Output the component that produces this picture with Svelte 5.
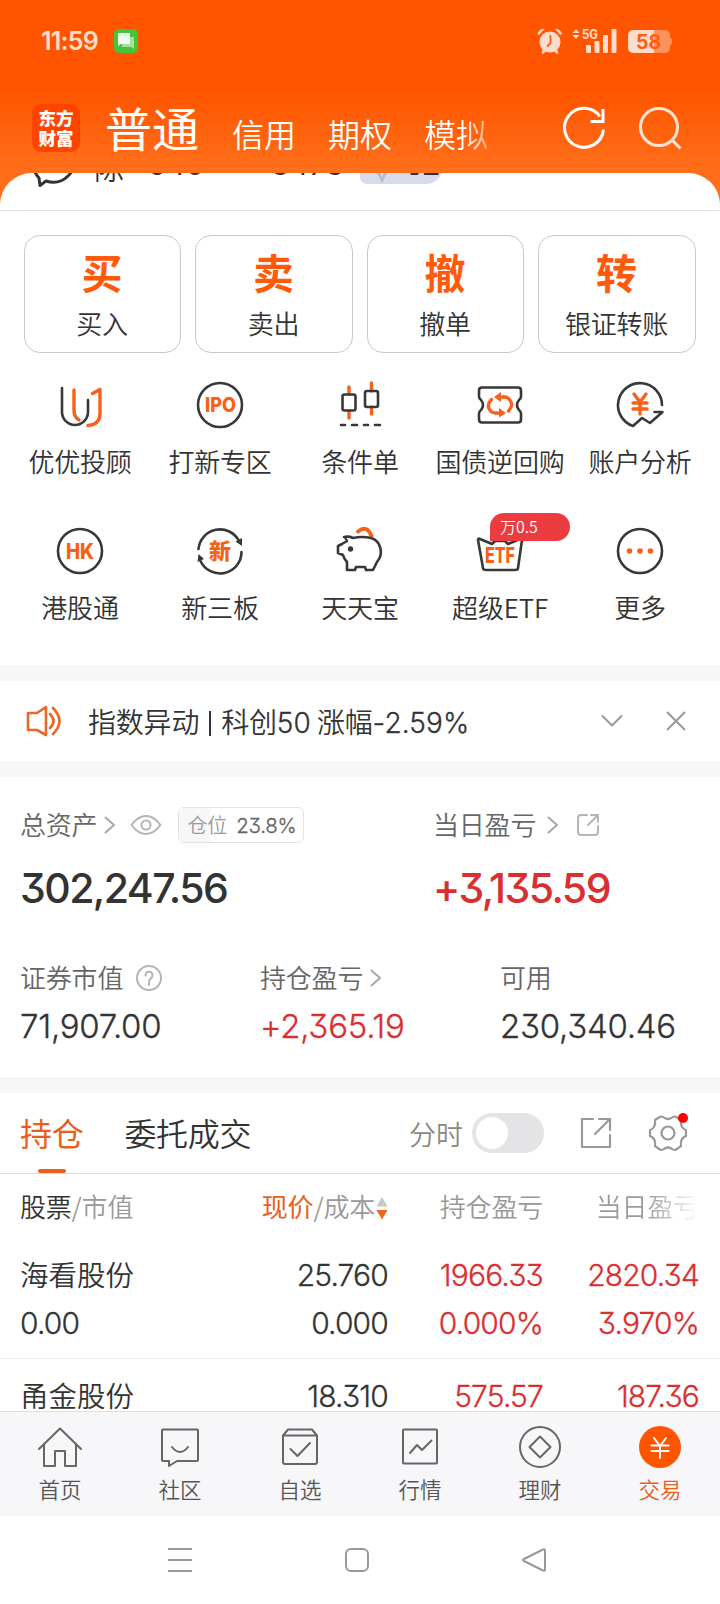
<script>
  const tabs = ['信用', '期权', '模拟'];

  const actions = [
    { mark: '买', label: '买入' },
    { mark: '卖', label: '卖出' },
    { mark: '撤', label: '撤单' },
    { mark: '转', label: '银证转账' }
  ];

  const tools = [
    { icon: 'advisor', label: '优优投顾' },
    { icon: 'ipo', label: '打新专区' },
    { icon: 'candles', label: '条件单' },
    { icon: 'ticket', label: '国债逆回购' },
    { icon: 'analysis', label: '账户分析' },
    { icon: 'hk', label: '港股通' },
    { icon: 'newboard', label: '新三板' },
    { icon: 'piggy', label: '天天宝' },
    { icon: 'etf', label: '超级ETF', tag: '万0.5' },
    { icon: 'more', label: '更多' }
  ];

  const holdings = [
    { name: '海看股份', value: '0.00', price: '25.760', cost: '0.000', profit: '1966.33', rate: '0.000%', day: '2820.34', dayRate: '3.970%' },
    { name: '甬金股份', price: '18.310', profit: '575.57', day: '187.36' }
  ];

  const nav = [
    { icon: 'home', label: '首页' },
    { icon: 'chat', label: '社区' },
    { icon: 'box', label: '自选' },
    { icon: 'chart', label: '行情' },
    { icon: 'wealth', label: '理财' },
    { icon: 'trade', label: '交易' }
  ];

  let current = $state('交易');
  let timeline = $state(false);
  let showNotice = $state(true);
  const position = 25;
</script>

{#snippet chevron()}
  <svg class="chevron" width="12" height="18" viewBox="0 0 12 18"><path d="M1.5 1.5 10 9l-8.500 7.500" /></svg>
{/snippet}

<div class="page">
  <header>
    <div class="status">
      <span class="clock">11:59</span>
      <svg class="msg" width="24" height="24" viewBox="0 0 24 24">
        <rect width="24" height="24" rx="5" fill="#45c43a" />
        <path d="M8 8h12v12l-3-2H8z" fill="#a5e39c" />
        <path d="M4 4h12v11H7l-3 2z" fill="#f0faee" />
      </svg>
      <svg class="signal" width="136" height="26" viewBox="0 0 136 26">
        <g fill="#ffdccb">
          <circle cx="13" cy="14" r="10.500" />
          <path d="M.5 6.500a6 6 0 0 1 7-5.500l-5 5.500zM25 6.500A6 6 0 0 0 18 1l5 5.500zM6 21l3 2-2.500 3L4.500 25zM20 21l-3 2 2.500 3 2-1z" />
          <path d="m39 1 3.500 4h-7zM39 11l3.500-4h-7z" />
          <rect x="49" y="17" width="5" height="8" rx="1" />
          <rect x="57.500" y="13" width="5" height="12" rx="1" />
          <rect x="66" y="7" width="5" height="18" rx="1" />
          <rect x="74.500" y="1" width="5" height="24" rx="1" />
          <text x="45" y="10.500" font-size="13" font-weight="700" textLength="16" lengthAdjust="spacingAndGlyphs">5G</text>
          <path d="M96 2h21v23H96a5 5 0 0 1-5-5V7a5 5 0 0 1 5-5z" />
        </g>
        <path d="M117 2h11a5 5 0 0 1 5 5v2.500c3 1 3 7 0 8V20a5 5 0 0 1-5 5h-11z" fill="#ff925c" />
        <path d="M13.500 8v7l-3 3" fill="none" stroke="#ff5d10" stroke-width="1.800" />
        <text x="99" y="20.500" font-size="20" font-weight="700" fill="#ff5d10" textLength="25" lengthAdjust="spacingAndGlyphs">58</text>
      </svg>
    </div>
    <div class="titlebar">
      <div class="logo">东方<br />财富</div>
      <h1>普通</h1>
      <nav class="modes">
        {#each tabs as tab}
          <span>{tab}</span>
        {/each}
      </nav>
      <svg class="head-icon" width="44" height="44" viewBox="0 0 44 44"><path d="M40.500 23.500A19.500 19.500 0 1 1 37 10.500M40 3v12.500H27.500" /></svg>
      <svg class="head-icon search" width="44" height="44" viewBox="0 0 44 44"><circle cx="21" cy="21" r="18.500" /><path d="m34 34 8.500 8.500" /></svg>
    </div>
  </header>

  <main>
    <div class="account">
      <svg width="42" height="34" viewBox="0 0 42 34"><path d="M7 24C-4 12 7 2 21 2s26 10 15 20c-5 5-13 8-22 5l-6 4.500z" /></svg>
      <span class="owner">陈</span>
      <span class="acct-no">540</span>
      <span class="acct-no tail">8473</span>
      <span class="level">
        <svg width="18" height="18" viewBox="0 0 18 18"><path d="M1 1h16L9 17z" fill="#b9bac9" /><path d="M6 1h6L9 12z" fill="#e4e4ee" /></svg>
        <b>V2</b>
      </span>
    </div>

    <section class="actions">
      {#each actions as a}
        <button>
          <b>{a.mark}</b>
          <span>{a.label}</span>
        </button>
      {/each}
    </section>

    <section class="tools">
      {#each tools as t}
        <div class="tool">
          <svg width="52" height="52" viewBox="0 0 52 52">
            {#if t.icon === 'advisor'}
              <path d="M8 9v24a13 13 0 0 0 26 0V21" />
              <path class="o" d="M20 11v20q0 7 5 10M38.500 14.500l7.500-4v24q0 11-12 12" />
            {:else if t.icon === 'ipo'}
              <circle cx="26" cy="26" r="22" />
              <text x="11" y="33" font-size="20" textLength="31" lengthAdjust="spacingAndGlyphs">IPO</text>
            {:else if t.icon === 'candles'}
              <path class="o" d="M15 8v7M15 32v7M37.500 4v8M37.500 28v7" />
              <rect x="8.500" y="15.500" width="13" height="16" rx="2" />
              <rect x="31" y="12" width="13" height="16" rx="2" />
              <path d="M7 46h4M18 46h5M30 46h4M41 46h5" />
            {:else if t.icon === 'ticket'}
              <path d="M8 8.500h36q3 0 3 3v6q0 2-2 3.500-4 5 0 10 2 1.500 2 3.500v6q0 3-3 3H8q-3 0-3-3v-6q0-2 2-3.500 4-5 0-10-2-1.500-2-3.500v-6q0-3 3-3z" />
              <path class="o" d="M17.500 20.500q-5 5-2 10 2 3.500 6 3.500h6M34.500 32q5-5 2-10-2-4-6-4h-6" />
              <path class="of" d="m27 13-7 5 7 5zM25 29l7 5-7 4.500z" />
            {:else if t.icon === 'analysis'}
              <path d="M48 26A22 22 0 1 0 19 47l9-8 8 5 12.500-11h-8" />
              <path class="o" d="m20 15 6 8 6-8M19 24h14M19 30h14M26 23v12" />
            {:else if t.icon === 'hk'}
              <circle cx="26" cy="26" r="22" />
              <text x="12" y="33.500" font-size="21" textLength="28" lengthAdjust="spacingAndGlyphs">HK</text>
            {:else if t.icon === 'newboard'}
              <path d="M4.500 24a21.500 21.500 0 0 1 40.500-8M47.500 27a21.500 21.500 0 0 1-41 9" />
              <path class="df" d="m41.500 16.500 6.500 4.500v-8zM3.500 37l1-8 5.500 5z" />
              <text class="cjk" x="15" y="33.500" font-size="22">新</text>
            {:else if t.icon === 'piggy'}
              <path class="o thick" d="M24 6.500q9-7 13.500 4.500" />
              <path d="M13 16q-2-4-3-4 5-1 9 1 9-2 18 0c10 3 13 16 6 24l-4 8h-7l-1-3h-9l-1 3h-8v-8q-3-3-4-7l-5-2v-7l4-2z" />
              <circle class="df" cx="16.500" cy="24" r="2.700" />
            {:else if t.icon === 'etf'}
              <path d="M4 15q0-2 2-1l12 5 3-3h10l3 3 12-5q2-1 2 1l-4 28q0 2-3 2H12q-3 0-3-2z" />
              <text x="11" y="37.500" font-size="21" textLength="30" lengthAdjust="spacingAndGlyphs">ETF</text>
            {:else}
              <circle cx="26" cy="26" r="22" />
              <g class="of"><circle cx="15.500" cy="26" r="2.800" /><circle cx="26" cy="26" r="2.800" /><circle cx="36.500" cy="26" r="2.800" /></g>
            {/if}
          </svg>
          <span>{t.label}</span>
          {#if t.tag}<em>{t.tag}</em>{/if}
        </div>
      {/each}
    </section>

    {#if showNotice}
      <section class="notice">
        <svg width="36" height="34" viewBox="0 0 36 34"><path d="M2 9h9l9-6v28l-9-5H2zM24 10q7 7 0 14M27 4q13 13 0 26" /></svg>
        <p>指数异动<i></i>科创<span class="num">50</span> 涨幅<span class="num">-2.59%</span></p>
        <svg class="grey" width="22" height="22" viewBox="0 0 22 22"><path d="m1.500 6 9.500 9.500L20.500 6" /></svg>
        <svg class="grey" width="22" height="22" viewBox="0 0 22 22" role="button" tabindex="0" aria-label="关闭" onclick={() => (showNotice = false)} onkeydown={() => (showNotice = false)}><path d="m2.500 2.500 17 17M19.500 2.500l-17 17" /></svg>
      </section>
    {/if}

    <section class="assets">
      <div class="summary">
        <div class="total">
          <div class="label">
            总资产{@render chevron()}
            <svg class="eye" width="32" height="22" viewBox="0 0 32 22"><path d="M1.500 11Q8 2 16 2t14.500 9Q24 20 16 20T1.500 11z" /><circle cx="16" cy="11" r="4.500" /></svg>
            <div class="position">
              <div class="fill" style="width: {position}%"></div>
              <span>仓位</span><span class="num">23.8%</span>
            </div>
          </div>
          <strong class="num">302,247.56</strong>
        </div>
        <div class="today">
          <div class="label">
            当日盈亏{@render chevron()}
            <svg class="share" width="24" height="24" viewBox="0 0 24 24"><path d="M11 2H5Q2 2 2 5v14q0 3 3 3h14q3 0 3-3v-6M15 2h7v7M22 2 12 12" /></svg>
          </div>
          <strong class="num red">+3,135.59</strong>
        </div>
      </div>
      <div class="details">
        <div>
          <div class="label">
            证券市值
            <svg class="help" width="28" height="28" viewBox="0 0 28 28"><circle cx="14" cy="14" r="12" /><path d="M10.500 11.500c0-5 7-5 7 0 0 3-3.500 3-3.500 6M14 19v2" /></svg>
          </div>
          <span class="num">71,907.00</span>
        </div>
        <div>
          <div class="label">持仓盈亏{@render chevron()}</div>
          <span class="num red">+2,365.19</span>
        </div>
        <div>
          <div class="label">可用</div>
          <span class="num">230,340.46</span>
        </div>
      </div>
    </section>

    <section class="holdings">
      <div class="bar">
        <span class="tab on">持仓</span>
        <span class="tab">委托成交</span>
        <span class="mode">分时</span>
        <button class="switch" class:checked={timeline} aria-label="分时" onclick={() => (timeline = !timeline)}></button>
        <svg class="open" width="32" height="32" viewBox="0 0 32 32"><path d="M13 2H2v28h28V18M19 2h11v11M30 2 15 17" /></svg>
        <svg class="gear" width="40" height="40" viewBox="0 0 40 40">
          <path d="M12.500 3.500 15 4q5 4 10 0l2.500-.5 5.500 3.500q-1 8 5 10v6q-6 2-5 10l-5.500 4-2.500-.5q-5-4-10 0l-2.500.5L7 33q1-8-5-10v-6q6-2 5-10z" />
          <circle cx="20" cy="20" r="6.500" />
          <circle class="dot" cx="35" cy="5" r="5" />
        </svg>
      </div>
      <div class="row head">
        <div><span class="dark">股票</span>/市值</div>
        <div>
          <span class="orange">现价</span>/成本<svg width="12" height="24" viewBox="0 0 12 24"><path d="m6 1 5.500 9.500H.5z" fill="#c8c8c8" /><path d="M6 23.500.5 14h11z" fill="#f4621c" /></svg>
        </div>
        <div>持仓盈亏</div>
        <div class="fade">当日盈亏</div>
      </div>
      {#each holdings as h}
        <div class="row stock">
          <div><span class="name">{h.name}</span><span class="num">{h.value}</span></div>
          <div><span class="num">{h.price}</span><span class="num">{h.cost}</span></div>
          <div class="red"><span class="num">{h.profit}</span><span class="num">{h.rate}</span></div>
          <div class="red"><span class="num">{h.day}</span><span class="num">{h.dayRate}</span></div>
        </div>
      {/each}
    </section>
  </main>

  <nav class="bottom">
    {#each nav as n}
      <button class:active={current === n.label} onclick={() => (current = n.label)}>
        <svg width="44" height="44" viewBox="0 0 44 44">
          {#if n.icon === 'home'}
            <path d="m1 24 21-20.500L43 24M6 20v21h11V26h10v15h11V20" />
          {:else if n.icon === 'chat'}
            <path d="M5 4.500h34q1 0 1 1V35q0 1-1 1H19l-8 5v-5H5q-1 0-1-1V5.500q0-1 1-1zM14 22q8 10 16 0" />
          {:else if n.icon === 'box'}
            <path d="M5 10.500h34V37q0 2-2 2H7q-2 0-2-2zl5-6h24l5 6M12.500 24l7 7 12.500-13" />
          {:else if n.icon === 'chart'}
            <rect x="5" y="4.500" width="34" height="34" rx="1" />
            <path d="m12 28 7-8 5 5 9.500-9.500" />
          {:else if n.icon === 'wealth'}
            <circle cx="22" cy="22" r="20" />
            <path d="M22 11.500 32.500 22 22 32.500 11.500 22z" />
          {:else}
            <circle class="solid" cx="22" cy="22" r="21" />
            <path class="yen" d="m16 13 6 8 6-8M13.500 20.500h17M13.500 26h17M22 20.500V33" />
          {/if}
        </svg>
        <span>{n.label}</span>
      </button>
    {/each}
  </nav>

  <footer>
    <svg width="28" height="28" viewBox="0 0 28 28"><path d="M2 3h24M2 14h24M2 25h24" /></svg>
    <svg width="28" height="28" viewBox="0 0 28 28"><rect x="3" y="3" width="22" height="22" rx="5" /></svg>
    <svg width="28" height="28" viewBox="0 0 28 28"><path d="M23 3.500Q25 2.500 25 5v18.500q0 2-2 1L4 15q-2-1 0-2z" /></svg>
  </footer>
</div>

<style>
  :global(body) {
    margin: 0;
    background: #fff;
  }

  .page {
    width: 720px;
    height: 1604px;
    display: flex;
    flex-direction: column;
    overflow: hidden;
    color: #333;
    font-family: 'Noto Sans CJK SC', sans-serif;
    font-weight: 350;
    background: linear-gradient(#ff5500 90px, #ff6d19 165px, #ff7420 210px);
  }

  button {
    font: inherit;
    color: inherit;
    background: none;
    border: 0;
    padding: 0;
  }

  svg {
    flex: none;
    fill: none;
    stroke-linecap: round;
    stroke-linejoin: round;
  }

  /* light cut thickened a little, with the flat-topped 3 */
  .num {
    font-family: Inter, 'Noto Sans CJK SC', sans-serif;
    font-weight: 350;
    -webkit-text-stroke: 0.3px currentColor;
    font-feature-settings: 'cv09';
    letter-spacing: -0.028em;
  }

  .red {
    color: #d92f30;
  }

  header {
    height: 173px;
    flex: none;
    color: #fff;
  }

  .status {
    height: 82px;
    display: flex;
    align-items: center;
    padding: 0 47px 0 41px;
  }

  .clock {
    width: 73px;
    font: 600 25px Inter, sans-serif;
    letter-spacing: -0.8px;
    color: #ffdccb;
  }

  .signal {
    margin-left: auto;
  }

  .signal text {
    font-family: Inter, sans-serif;
  }

  .titlebar {
    height: 91px;
    display: flex;
    align-items: center;
    padding: 0 38px 0 32px;
  }

  .logo {
    width: 48px;
    height: 44px;
    padding-top: 4px;
    border-radius: 9px;
    background: #ff4400;
    font-size: 17.500px;
    font-weight: 900;
    line-height: 20px;
    text-align: center;
  }

  h1 {
    margin: -2px 0 0 25px;
    font-size: 47px;
    line-height: 60px;
    font-weight: 400;
  }

  .modes {
    width: 260px;
    margin: 10px 0 0 33px;
    display: flex;
    gap: 32px;
    font-size: 32px;
    line-height: 44px;
  }

  .modes span:last-child {
    background: linear-gradient(90deg, #fff 60%, #ffa878 100%);
    background-clip: text;
    color: transparent;
  }

  .head-icon {
    margin-left: auto;
    stroke: #fff;
    stroke-width: 3;
    stroke-linecap: butt;
    stroke-linejoin: miter;
  }

  .search {
    margin-left: 31px;
    stroke: #ffe3d2;
  }

  main {
    flex: 1;
    min-height: 0;
    overflow: hidden;
    background: #fff;
    border-radius: 32px 32px 0 0;
  }

  .account {
    height: 56px;
    margin-top: -19px;
    display: flex;
    border-bottom: 1px solid #e4e4e6;
    padding-left: 32px;
    font-size: 30px;
    line-height: 30px;
  }

  .account > svg {
    margin-top: 0;
    stroke: #333;
    stroke-width: 3;
  }

  .owner {
    width: 54px;
    margin-left: 20px;
    margin-top: -3px;
  }

  .acct-no {
    width: 123px;
    margin-top: -5px;
    font-family: Inter, sans-serif;
    font-weight: 400;
  }

  .tail {
    width: 89px;
  }

  .level {
    width: 70px;
    height: 30px;
    padding-left: 13px;
    display: flex;
    align-items: flex-end;
    gap: 14px;
    background: #d9dbe8;
    border-radius: 8px 15px 20px 8px;
  }

  .level b {
    font: italic 900 26px/36px Inter, sans-serif;
    letter-spacing: -2px;
  }

  .actions {
    display: grid;
    grid-template-columns: 157px 158px 157px 158px;
    gap: 14px;
    padding: 24px 24px 0;
  }

  .actions button {
    height: 118px;
    display: flex;
    flex-direction: column;
    align-items: center;
    padding-right: 1px;
    border: 1px solid #c8c8c8;
    border-radius: 16px;
  }

  .actions b {
    margin-top: 8px;
    font-size: 41px;
    line-height: 54px;
    font-weight: 700;
    color: #ff5a0a;
  }

  .actions span {
    margin-top: 6px;
    font-size: 26px;
    line-height: 38px;
    letter-spacing: -0.2px;
  }

  .tools {
    display: grid;
    grid-template-columns: repeat(5, 140px);
    grid-auto-rows: 146px;
    height: 286px;
    padding: 26px 10px 0;
  }

  .tool {
    position: relative;
    display: flex;
    flex-direction: column;
    align-items: center;
  }

  .tool span {
    margin-top: 11px;
    font-size: 26px;
    line-height: 38px;
    letter-spacing: -0.2px;
    white-space: nowrap;
  }

  .tool svg {
    stroke: #383838;
    stroke-width: 2.600;
  }

  .tool .o {
    stroke: #f4621c;
    stroke-width: 3.400;
  }

  .tool .thick {
    stroke-width: 4;
  }

  .tool .of {
    fill: #f4621c;
    stroke: none;
  }

  .tool .df {
    fill: #383838;
    stroke: none;
  }

  .tool text {
    fill: #f9600f;
    stroke: none;
    font-family: Inter, sans-serif;
    font-weight: 800;
  }

  .tool .cjk {
    font-family: 'Noto Sans CJK SC', sans-serif;
    font-weight: 900;
  }

  .tool em {
    position: absolute;
    left: 60px;
    top: -12px;
    width: 70px;
    height: 28px;
    padding-left: 10px;
    font-size: 16px;
    line-height: 27px;
    font-style: normal;
    color: #fff;
    background: #ec3c3f;
    border-radius: 14px 14px 14px 0;
  }

  .notice {
    height: 80px;
    display: flex;
    align-items: center;
    padding: 0 33px 0 26px;
    border-top: 16px solid #f7f7fa;
  }

  .notice svg {
    stroke: #ea6727;
    stroke-width: 2.600;
  }

  .notice p {
    flex: 1;
    margin: 2px 0 0 26px;
    font-size: 28px;
    line-height: 40px;
    letter-spacing: -0.2px;
  }

  .notice i {
    display: inline-block;
    width: 2px;
    height: 25px;
    margin: 0 10px;
    background: #333;
    vertical-align: -3px;
  }

  .notice .num {
    letter-spacing: 0.1px;
  }

  .notice .grey {
    margin-left: 42px;
    stroke: #999;
    stroke-width: 2;
  }

  .assets {
    height: 300px;
    border-top: 16px solid #f7f7fa;
    border-bottom: 16px solid #f7f7fa;
  }

  .label {
    display: flex;
    align-items: center;
    height: 38px;
    font-size: 26px;
    line-height: 36px;
    letter-spacing: -0.2px;
    color: #666;
  }

  .label svg {
    margin-top: 1px;
    stroke: #b5b5b5;
    stroke-width: 2;
  }

  .label .chevron {
    margin-left: 7px;
    stroke: #a8a8a8;
  }

  .summary {
    display: flex;
    padding: 28px 0 0 20px;
  }

  .total {
    width: 413px;
  }

  .today .label .chevron {
    margin-left: 11px;
  }

  .eye {
    margin-left: 14px;
  }

  .share {
    margin-left: 17px;
  }

  .position {
    position: relative;
    display: flex;
    justify-content: space-between;
    width: 109px;
    height: 34px;
    margin-top: 1px;
    margin-left: 16px;
    padding: 0 7px 0 8px;
    border: 1px solid #e2e2e4;
    border-radius: 6px;
    font-size: 20px;
    line-height: 34px;
    color: #999;
  }

  .position span {
    position: relative;
  }

  .position .num {
    font-size: 20.500px;
    line-height: 35px;
    letter-spacing: -0.3px;
    color: #666;
  }

  .fill {
    position: absolute;
    left: 0;
    top: 0;
    height: 100%;
    background: #f7f7fa;
  }

  .summary strong {
    display: block;
    margin-top: 17px;
    font-size: 41px;
    line-height: 56px;
    font-weight: 500;
    letter-spacing: -0.038em;
    -webkit-text-stroke: 0;
  }

  .details {
    display: flex;
    padding: 42px 0 0 20px;
  }

  .details > div {
    flex: none;
    width: 240px;
  }

  .details .num {
    display: block;
    margin-top: 8px;
    font-size: 33px;
    line-height: 44px;
    letter-spacing: -0.008em;
  }

  .help {
    margin-left: 12px;
  }

  .bar {
    height: 80px;
    display: flex;
    align-items: center;
    padding: 0 32px 0 20px;
    border-bottom: 1px solid #dcdcde;
  }

  .tab {
    position: relative;
    height: 80px;
    margin-right: 41px;
    font-size: 32px;
    line-height: 78px;
    letter-spacing: -0.3px;
  }

  .on {
    color: #e8601a;
    font-weight: 400;
  }

  .on::after {
    content: '';
    position: absolute;
    left: 18px;
    bottom: 0;
    width: 28px;
    height: 4px;
    border-radius: 2px;
    background: #e8601a;
  }

  .mode {
    margin-left: auto;
    font-size: 27px;
    color: #888;
  }

  .switch {
    width: 72px;
    height: 40px;
    margin-left: 9px;
    padding: 4px;
    border-radius: 20px;
    background: #e4e4e6;
  }

  .switch::after {
    content: '';
    display: block;
    width: 32px;
    height: 32px;
    border-radius: 50%;
    background: #fff;
  }

  .checked::after {
    margin-left: 32px;
  }

  .bar svg {
    stroke: #999;
    stroke-width: 2.200;
    overflow: visible;
  }

  .open {
    margin-left: 36px;
  }

  .gear {
    margin-left: 36px;
  }

  .bar .dot {
    fill: #fe0000;
    stroke: none;
  }

  .row {
    display: grid;
    grid-template-columns: 168px 200px 155px 156px;
    padding: 0 21px 0 20px;
    text-align: right;
  }

  .row > div:first-child {
    text-align: left;
  }

  .head {
    height: 64px;
    font-size: 26px;
    line-height: 64px;
    letter-spacing: -0.2px;
    color: #999;
  }

  .head svg {
    margin-left: 1px;
    vertical-align: -3px;
  }

  .dark {
    color: #333;
  }

  .orange {
    color: #e8601a;
    font-weight: 400;
  }

  .fade {
    background: linear-gradient(90deg, #999 65%, #fff 100%);
    background-clip: text;
    color: transparent;
  }

  .stock {
    height: 120px;
    border-bottom: 1px solid #ebebed;
  }

  .stock > div {
    display: flex;
    flex-direction: column;
    gap: 4px;
    padding-top: 14px;
  }

  .stock span {
    font-size: 30px;
    line-height: 46px;
    height: 44px;
  }

  .stock .name {
    font-size: 28.500px;
    line-height: 44px;
  }

  .bottom {
    flex: none;
    height: 104px;
    display: flex;
    background: #f7f7fa;
    border-top: 1px solid #dedee2;
  }

  .bottom button {
    flex: 1;
    display: flex;
    flex-direction: column;
    align-items: center;
    padding-top: 13px;
    font-size: 21.500px;
    line-height: 30px;
    color: #555;
  }

  .bottom span {
    margin-top: 5px;
  }

  .bottom svg {
    stroke: #666;
    stroke-width: 2;
  }

  .bottom .active {
    color: #e8601a;
  }

  .solid {
    fill: #ff5500;
    stroke: none;
  }

  .bottom .yen {
    stroke: #fff;
  }

  footer {
    flex: none;
    height: 88px;
    display: flex;
    align-items: center;
    justify-content: center;
    gap: 149px;
    padding-right: 6px;
    box-sizing: border-box;
    background: #fff;
  }

  footer svg {
    stroke: #999;
    stroke-width: 2;
    stroke-linecap: butt;
  }
</style>
